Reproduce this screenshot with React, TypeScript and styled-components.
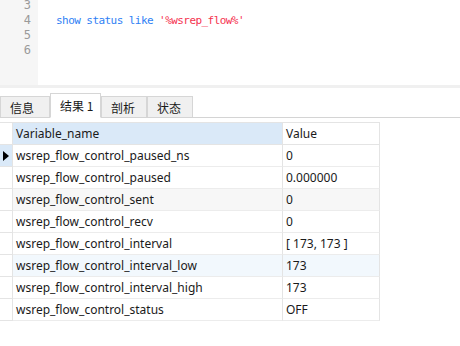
import styled, { createGlobalStyle } from "styled-components";

const GlobalStyle = createGlobalStyle`
  html, body {
    margin: 0;
    padding: 0;
    background: #fff;
  }
  body {
    font-family: "Noto Sans", "Noto Sans CJK SC", sans-serif;
  }
`;

const rows = [
  { name: "wsrep_flow_control_paused_ns", value: "0", tone: "current" },
  { name: "wsrep_flow_control_paused", value: "0.000000", tone: "plain" },
  { name: "wsrep_flow_control_sent", value: "0", tone: "gray" },
  { name: "wsrep_flow_control_recv", value: "0", tone: "plain" },
  { name: "wsrep_flow_control_interval", value: "[ 173, 173 ]", tone: "plain" },
  { name: "wsrep_flow_control_interval_low", value: "173", tone: "hover" },
  { name: "wsrep_flow_control_interval_high", value: "173", tone: "plain" },
  { name: "wsrep_flow_control_status", value: "OFF", tone: "plain" },
];

const tabs = ["信息", "结果 1", "剖析", "状态"];
const tabWidths = [50, 51, 46, 46];

const App = () => {
  return (
    <Page>
      <GlobalStyle />
      <Editor>
        <Gutter>
          {[3, 4, 5, 6].map((n) => (
            <LineNo key={n}>{n}</LineNo>
          ))}
        </Gutter>
        <Code>
          <CodeLine />
          <CodeLine>
            <Kw>show status like </Kw>
            <Str>'%wsrep_flow%'</Str>
          </CodeLine>
        </Code>
      </Editor>
      <Splitter />
      <TabBar>
        {tabs.map((t, i) => (
          <Tab key={t} active={i === 1} w={tabWidths[i]}>
            {t}
          </Tab>
        ))}
      </TabBar>
      <Table>
        <HeadCell kind="marker" />
        <HeadCell kind="name">Variable_name</HeadCell>
        <HeadCell kind="value">Value</HeadCell>
        {rows.map((r, i) => (
          <Row key={r.name} tone={r.tone}>
            <Marker current={i === 0}>
              {i === 0 && <Arrow />}
            </Marker>
            <Cell>{r.name}</Cell>
            <Cell>{r.value}</Cell>
          </Row>
        ))}
      </Table>
    </Page>
  );
};

export default App;

const Page = styled.div`
  width: 460px;
  height: 346px;
  overflow: hidden;
  background: #fff;
`;

const Editor = styled.div`
  height: 85px;
  display: flex;
  overflow: hidden;
`;

const Gutter = styled.div`
  width: 38px;
  background: #f6f6f6;
  display: flex;
  flex-direction: column;
  align-items: flex-end;
  padding-right: 7px;
  box-sizing: border-box;
  padding-top: 0;
  margin-top: -2px;
`;

const LineNo = styled.div`
  height: 15px;
  line-height: 15px;
  font-family: "DejaVu Sans Mono", "Liberation Mono", monospace;
  font-size: 12px;
  color: #9a9a9a;
`;

const Code = styled.div`
  display: flex;
  flex-direction: column;
  padding-left: 18px;
  margin-top: -2px;
`;

const CodeLine = styled.div`
  height: 15px;
  line-height: 15px;
  font-family: "DejaVu Sans Mono", "Liberation Mono", monospace;
  font-size: 11px;
  letter-spacing: -0.56px;
  white-space: pre;
`;

const Kw = styled.span`
  color: #2f7ff5;
`;

const Str = styled.span`
  color: #f5334f;
`;

const Splitter = styled.div`
  height: 3px;
  background: #f0f0f0;
`;

const TabBar = styled.div`
  height: 29px;
  display: flex;
  align-items: flex-end;
  border-bottom: 1px solid #d4d4d4;
`;

const Tab = styled.div.withConfig({
  shouldForwardProp: (prop) => prop !== "active" && prop !== "w",
})<{ active?: boolean; w: number }>`
  width: ${({ w }) => w}px;
  height: ${({ active }) => (active ? 25 : 21)}px;
  margin-bottom: ${({ active }) => (active ? -1 : 0)}px;
  box-sizing: border-box;
  display: flex;
  align-items: center;
  padding-left: 9px;
  font-family: "Noto Sans CJK SC", sans-serif;
  font-size: 12px;
  color: #1a1a1a;
  background: ${({ active }) => (active ? "#fff" : "#f0f0f0")};
  border: 1px solid #d6d6d6;
  border-bottom: ${({ active }) => (active ? "1px solid #fff" : "none")};
`;

const Table = styled.div`
  margin-top: 4px;
  width: 380px;
  display: grid;
  grid-template-columns: 13px 270px 97px;
  border-top: 1px solid #e4e4e4;
`;

const HeadCell = styled.div<{ kind: "marker" | "name" | "value" }>`
  height: 22px;
  box-sizing: border-box;
  line-height: 21px;
  padding-left: 3px;
  font-size: 12px;
  color: #1a1a1a;
  white-space: nowrap;
  background: ${({ kind }) => (kind === "name" ? "#dae9f8" : "#fff")};
  border-bottom: 1px solid #e4e4e4;
  border-right: 1px solid #e4e4e4;
`;

const toneBg: Record<string, string> = {
  plain: "#fff",
  current: "#fff",
  gray: "#f7f7f7",
  hover: "#f2f8fd",
};

const Row = styled.div.withConfig({
  shouldForwardProp: (prop) => prop !== "tone",
})<{ tone: string }>`
  display: contents;

  & > div:not(:first-child) {
    background: ${({ tone }) => toneBg[tone]};
  }
`;

const Marker = styled.div.withConfig({
  shouldForwardProp: (prop) => prop !== "current",
})<{ current?: boolean }>`
  height: 22px;
  box-sizing: border-box;
  display: flex;
  align-items: center;
  padding-left: 3px;
  background: ${({ current }) => (current ? "#dae9f8" : "#fff")};
  border-right: 1px solid #e4e4e4;
  border-bottom: 1px solid #e4e4e4;
`;

const Arrow = styled.div`
  width: 0;
  height: 0;
  border-top: 5px solid transparent;
  border-bottom: 5px solid transparent;
  border-left: 6px solid #000;
`;

const Cell = styled.div`
  height: 22px;
  box-sizing: border-box;
  line-height: 21px;
  padding-left: 3px;
  font-size: 12px;
  color: #1a1a1a;
  white-space: nowrap;
  border-bottom: 1px solid #ececec;
  border-right: 1px solid #e4e4e4;
`;
